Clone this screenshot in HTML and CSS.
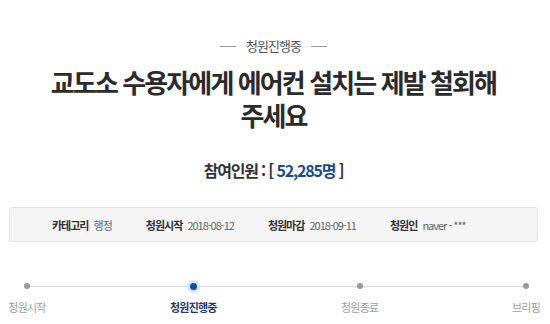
FILE: index.html
```html
<!DOCTYPE html>
<html lang="ko">

<head>
  <meta charset="UTF-8">
  <meta name="viewport" content="width=device-width, initial-scale=1.0">
  <title>청원진행중</title>
  <link rel="stylesheet" href="styles.css">
</head>

<body>
  <div class="petition">
    <div class="petition-status"><span>청원진행중</span></div>
    <h3 class="petition-title">교도소 수용자에게 에어컨 설치는 제발 철회해 주세요</h3>
    <h2 class="petition-count">참여인원 : [ <span class="count-num">52,285명</span> ]</h2>

    <ul class="petition-info">
      <li><strong>카테고리</strong> 행정</li>
      <li><strong>청원시작</strong> 2018-08-12</li>
      <li><strong>청원마감</strong> 2018-09-11</li>
      <li><strong>청원인</strong> naver - ***</li>
    </ul>

    <ol class="petition-steps">
      <li class="step"><span class="dot"></span><span class="step-name">청원시작</span></li>
      <li class="step active"><span class="dot"></span><span class="step-name">청원진행중</span></li>
      <li class="step"><span class="dot"></span><span class="step-name">청원종료</span></li>
      <li class="step"><span class="dot"></span><span class="step-name">브리핑</span></li>
    </ol>
  </div>
</body>

</html>
```

FILE: styles.css
```css
/* Base styles */
body {
  font-family: "Noto Sans CJK KR", "Noto Sans", sans-serif;
  margin: 0;
  padding: 0;
  background-color: #fff;
  color: #333;
}

.petition {
  padding: 37px 12px 0 9px;
}

/* Status label with lines on both sides */
.petition-status {
  display: flex;
  justify-content: center;
  align-items: center;
  gap: 10px;
  font-size: 13px;
  line-height: 18px;
  letter-spacing: -1px;
  color: #555;
}

.petition-status::before,
.petition-status::after {
  content: "";
  width: 16px;
  height: 1px;
  background-color: #999;
}

.petition-title {
  margin: 10px 0 0;
  padding: 0 24px;
  text-align: center;
  word-break: keep-all;
  font-size: 26px;
  line-height: 33px;
  font-weight: bold;
  letter-spacing: -1.9px;
  color: #2b2b2b;
}

.petition-count {
  margin: 28px 0 0;
  text-align: center;
  font-size: 16px;
  line-height: 22px;
  font-weight: bold;
  letter-spacing: -1.2px;
  color: #333;
}

.count-num {
  color: #1b4a8f;
}

/* Info box */
.petition-info {
  list-style-type: none;
  margin: 26px 0 0;
  padding: 0 0 0 42px;
  height: 33px;
  display: flex;
  align-items: center;
  gap: 34px;
  background-color: #f5f5f5;
  border: 1px solid #e3e3e3;
  border-radius: 3px;
  font-size: 11px;
  letter-spacing: -1px;
  color: #666;
}

.petition-info strong {
  color: #333;
  margin-right: 3px;
}

/* Progress steps */
.petition-steps {
  list-style-type: none;
  margin: 38px -5px 0 1px;
  padding: 0;
  display: flex;
  justify-content: space-between;
  background: linear-gradient(#dcdcdc, #dcdcdc) no-repeat 17px 6px / calc(100% - 34px) 1px;
}

.step {
  width: 34px;
  display: flex;
  flex-direction: column;
  align-items: center;
}

.dot {
  width: 6px;
  height: 6px;
  margin: 3px 0;
  border-radius: 50%;
  background-color: #9a9a9a;
}

.step.active .dot {
  width: 7px;
  height: 7px;
  margin: 2.5px 0;
  background-color: #0c4ea2;
  box-shadow: 0 0 0 3px #d6e6fa;
}

.step-name {
  margin-top: 7px;
  white-space: nowrap;
  font-size: 11px;
  line-height: 16px;
  letter-spacing: -0.8px;
  color: #a0a0a0;
}

.step.active .step-name {
  font-weight: bold;
  color: #1f3c6e;
}
```
